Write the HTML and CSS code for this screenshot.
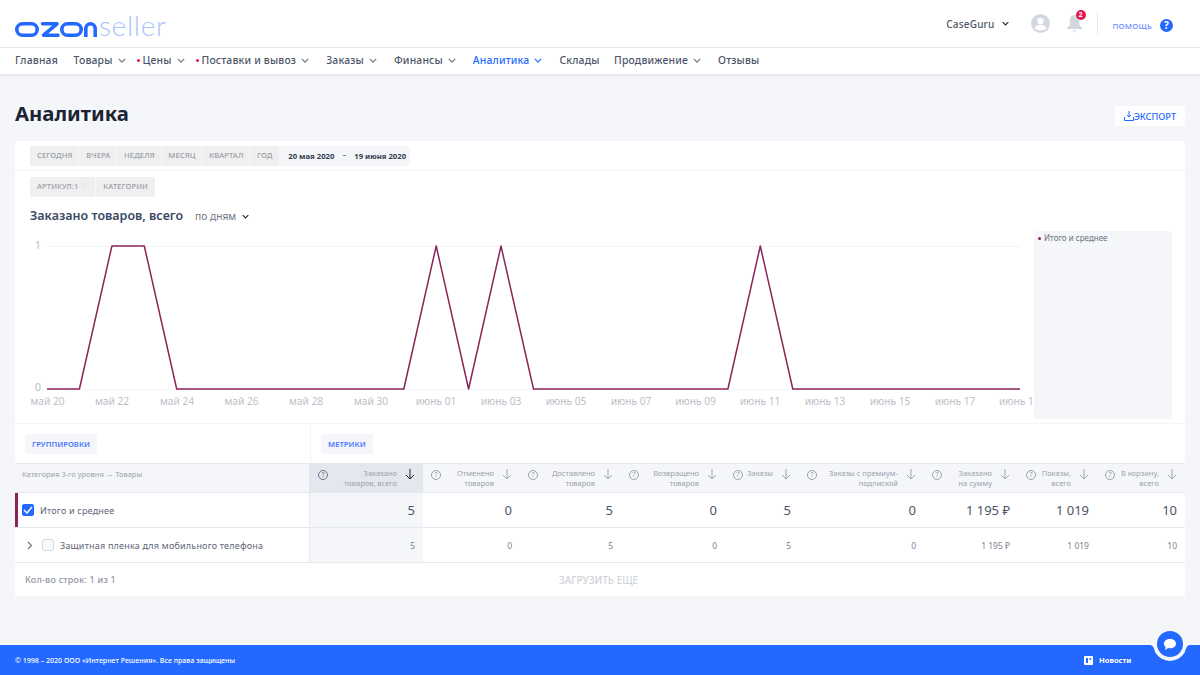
FILE: index.html
```html
<!DOCTYPE html>
<html lang="ru">
<head>
<meta charset="utf-8">
<title>Аналитика</title>
<link rel="stylesheet" href="styles.css">
</head>
<body>
<header class="topbar">
  <div class="logo">
    <svg class="logo-mark" width="82" height="15" viewBox="0 0 82 15" fill="none" stroke="#2369ff" stroke-width="3.600" role="img" aria-label="ozon">
      <rect x="1.800" y="1.800" width="20.400" height="11.400" rx="5.700"/>
      <polyline points="27.500,1.800 42,1.800 28.500,13.200 43,13.200" stroke-linejoin="round" stroke-linecap="round"/>
      <rect x="46.800" y="1.800" width="19.400" height="11.400" rx="5.700"/>
      <path d="M70.800 15V6.500a4.700 4.700 0 0 1 9.400 0V15"/>
    </svg>
    <span class="logo-text">seller</span>
  </div>
  <div class="top-right">
    <span class="account">CaseGuru</span>
    <svg class="chev dark acc-chev" viewBox="0 0 10 6" width="7" height="5"><path d="M1 1l4 4 4-4"/></svg>
    <svg class="avatar" width="19" height="19" viewBox="0 0 19 19"><circle cx="9.500" cy="9.500" r="9.500" fill="#d3d7e0"/><circle cx="9.500" cy="7" r="3.200" fill="#fff"/><path d="M3.500 14.500c.8-2.800 3.200-3.700 6-3.700s5.200.9 6 3.700c-1.500 1.300-3.500 2-6 2s-4.500-.7-6-2z" fill="#fff"/></svg>
    <span class="bell-wrap">
      <svg width="15" height="19" viewBox="0 0 15 19"><path d="M7.500 1c3.300 0 4.800 3 4.800 6v4l2.700 3v1H0v-1l2.700-3V7c0-3 1.500-6 4.800-6z" fill="#d3d7e0"/><path d="M5.500 16.500h4l-2 2z" fill="#d3d7e0"/></svg>
      <span class="badge">2</span>
    </span>
    <span class="divider"></span>
    <span class="help">ПОМОЩЬ</span>
    <span class="help-icon">?</span>
  </div>
</header>
<nav class="mainnav">
  <a class="nav-item">Главная</a>
  <a class="nav-item tight">Товары<svg class="chev" viewBox="0 0 10 6" width="8" height="5"><path d="M1 1l4 4 4-4"/></svg></a>
  <a class="nav-item tight"><i class="dot"></i>Цены<svg class="chev" viewBox="0 0 10 6" width="8" height="5"><path d="M1 1l4 4 4-4"/></svg></a>
  <a class="nav-item"><i class="dot"></i>Поставки и вывоз<svg class="chev" viewBox="0 0 10 6" width="8" height="5"><path d="M1 1l4 4 4-4"/></svg></a>
  <a class="nav-item">Заказы<svg class="chev" viewBox="0 0 10 6" width="8" height="5"><path d="M1 1l4 4 4-4"/></svg></a>
  <a class="nav-item">Финансы<svg class="chev" viewBox="0 0 10 6" width="8" height="5"><path d="M1 1l4 4 4-4"/></svg></a>
  <a class="nav-item active">Аналитика<svg class="chev" viewBox="0 0 10 6" width="8" height="5"><path d="M1 1l4 4 4-4"/></svg></a>
  <a class="nav-item short">Склады</a>
  <a class="nav-item">Продвижение<svg class="chev" viewBox="0 0 10 6" width="8" height="5"><path d="M1 1l4 4 4-4"/></svg></a>
  <a class="nav-item">Отзывы</a>
</nav>
<main class="page">
  <div class="title-row">
    <h1>Аналитика</h1>
    <button class="export">
      <svg width="10" height="10" viewBox="0 0 10 10" fill="none" stroke="#2369ff" stroke-width="1"><path d="M5 0v6M3 4l2 2 2-2M.5 6v3.500h9V6"/></svg>ЭКСПОРТ
    </button>
  </div>
  <section class="card">
    <div class="filters">
      <div class="seg">
        <span>СЕГОДНЯ</span><span>ВЧЕРА</span><span>НЕДЕЛЯ</span><span>МЕСЯЦ</span><span>КВАРТАЛ</span><span>ГОД</span>
      </div>
      <div class="dates"><b>20 мая 2020</b><i>–</i><b>19 июня 2020</b></div>
    </div>
    <div class="tags">
      <span class="tag">АРТИКУЛ:1<em>×</em></span><span class="tag">КАТЕГОРИИ</span>
    </div>
    <div class="chart-head">
      <h2>Заказано товаров, всего</h2>
      <span class="by">по дням</span>
      <svg class="chev dark" viewBox="0 0 10 6" width="7" height="5"><path d="M1 1l4 4 4-4"/></svg>
    </div>
    <div class="chart-wrap">
      <svg class="chart" width="1019" height="188" viewBox="15 231 1019 188">
        <line x1="47" x2="1020" y1="246.500" y2="246.500" class="grid"/>
        <line x1="47" x2="1020" y1="389.500" y2="389.500" class="grid"/>
        <text x="38" y="249" class="ylab" text-anchor="middle">1</text>
        <text x="38" y="391" class="ylab" text-anchor="middle">0</text>
        <polyline class="series" points="47,389 79.400,389 111.900,246 144.300,246 176.700,389 403.800,389 436.200,246 468.600,389 501,246 533.500,389 727.900,389 760.300,246 792.800,389 1020,389"/>
        <text x="47.500" y="405" class="xlab" text-anchor="middle">май 20</text>
        <text x="112" y="405" class="xlab" text-anchor="middle">май 22</text>
        <text x="177" y="405" class="xlab" text-anchor="middle">май 24</text>
        <text x="241.500" y="405" class="xlab" text-anchor="middle">май 26</text>
        <text x="306" y="405" class="xlab" text-anchor="middle">май 28</text>
        <text x="371" y="405" class="xlab" text-anchor="middle">май 30</text>
        <text x="436" y="405" class="xlab" text-anchor="middle">июнь 01</text>
        <text x="501" y="405" class="xlab" text-anchor="middle">июнь 03</text>
        <text x="566" y="405" class="xlab" text-anchor="middle">июнь 05</text>
        <text x="631" y="405" class="xlab" text-anchor="middle">июнь 07</text>
        <text x="695.500" y="405" class="xlab" text-anchor="middle">июнь 09</text>
        <text x="760" y="405" class="xlab" text-anchor="middle">июнь 11</text>
        <text x="825" y="405" class="xlab" text-anchor="middle">июнь 13</text>
        <text x="890" y="405" class="xlab" text-anchor="middle">июнь 15</text>
        <text x="955" y="405" class="xlab" text-anchor="middle">июнь 17</text>
        <text x="999" y="405" class="xlab">июнь 1</text>
      </svg>
      <aside class="legend"><i></i>Итого и среднее</aside>
    </div>
    <div class="controls">
      <div class="ctrl-left"><span class="pill">ГРУППИРОВКИ</span></div>
      <div class="ctrl-right"><span class="pill">МЕТРИКИ</span></div>
    </div>
    <div class="tbl">
      <div class="row head">
        <div class="c0"><span class="cat">Категория 3-го уровня → Товары</span></div>
        <div class="hc sel"><i class="q">?</i><span>Заказано<br>товаров, всего</span><svg class="arr" width="10" height="11" viewBox="0 0 10 11"><path d="M5 0v10M1 6l4 4 4-4"/></svg></div>
        <div class="hc"><i class="q">?</i><span>Отменено<br>товаров</span><svg class="arr" width="10" height="11" viewBox="0 0 10 11"><path d="M5 0v10M1 6l4 4 4-4"/></svg></div>
        <div class="hc"><i class="q">?</i><span>Доставлено<br>товаров</span><svg class="arr" width="10" height="11" viewBox="0 0 10 11"><path d="M5 0v10M1 6l4 4 4-4"/></svg></div>
        <div class="hc"><i class="q">?</i><span>Возвращено<br>товаров</span><svg class="arr" width="10" height="11" viewBox="0 0 10 11"><path d="M5 0v10M1 6l4 4 4-4"/></svg></div>
        <div class="hc"><i class="q">?</i><span>Заказы</span><svg class="arr" width="10" height="11" viewBox="0 0 10 11"><path d="M5 0v10M1 6l4 4 4-4"/></svg></div>
        <div class="hc"><i class="q">?</i><span>Заказы с премиум-<br>подпиской</span><svg class="arr" width="10" height="11" viewBox="0 0 10 11"><path d="M5 0v10M1 6l4 4 4-4"/></svg></div>
        <div class="hc"><i class="q">?</i><span>Заказано<br>на сумму</span><svg class="arr" width="10" height="11" viewBox="0 0 10 11"><path d="M5 0v10M1 6l4 4 4-4"/></svg></div>
        <div class="hc"><i class="q">?</i><span>Показы,<br>всего</span><svg class="arr" width="10" height="11" viewBox="0 0 10 11"><path d="M5 0v10M1 6l4 4 4-4"/></svg></div>
        <div class="hc"><i class="q">?</i><span>В корзину,<br>всего</span><svg class="arr" width="10" height="11" viewBox="0 0 10 11"><path d="M5 0v10M1 6l4 4 4-4"/></svg></div>
      </div>
      <div class="row total">
        <div class="c0 marked">
          <span class="check on"><svg width="10" height="8" viewBox="0 0 10 8" fill="none" stroke="#fff" stroke-width="1.400"><path d="M1 4l3 3 5-6"/></svg></span>
          <span class="rname">Итого и среднее</span>
        </div>
        <div class="v sel">5</div><div class="v">0</div><div class="v">5</div><div class="v">0</div><div class="v">5</div><div class="v">0</div><div class="v">1 195 ₽</div><div class="v">1 019</div><div class="v">10</div>
      </div>
      <div class="row item">
        <div class="c0">
          <svg class="expand" width="6" height="9" viewBox="0 0 6 9" fill="none" stroke="#6d7686" stroke-width="1.200"><path d="M1 1l3.500 3.500L1 8"/></svg>
          <span class="check"></span>
          <span class="rname">Защитная пленка для мобильного телефона</span>
        </div>
        <div class="v sel">5</div><div class="v">0</div><div class="v">5</div><div class="v">0</div><div class="v">5</div><div class="v">0</div><div class="v">1 195 ₽</div><div class="v">1 019</div><div class="v">10</div>
      </div>
    </div>
    <div class="tbl-foot">
      <span class="count">Кол-во строк: 1 из 1</span>
      <span class="more">ЗАГРУЗИТЬ ЕЩЕ</span>
    </div>
  </section>
</main>
<footer class="foot">
  <span class="copy">© 1998 – 2020 ООО «Интернет Решения». Все права защищены</span>
  <span class="news">
    <svg width="9" height="9" viewBox="0 0 9 9"><rect width="9" height="9" rx="1" fill="#fff"/><path d="M2 2h2v5H2zM5.500 2H7v2H5.500z" fill="#2369ff"/></svg>
    Новости
  </span>
  <svg class="chat-notch" width="40" height="17" viewBox="0 0 40 17"><path d="M0 0H40C36.500 0 36 4 34.400 8A17 17 0 0 1 5.600 8C4 4 3.500 0 0 0Z"/></svg>
  <span class="chat">
    <svg width="14" height="13" viewBox="0 0 14 13"><path d="M7 1c3.500 0 6 2 6 4.700S10.500 10.300 7 10.300c-.7 0-1.200 0-1.800-.2L2 12l.7-3C1.600 8.200 1 7 1 5.700 1 3 3.500 1 7 1z" fill="#fff"/></svg>
  </span>
</footer>
</body>
</html>
```
FILE: styles.css
```css
* { box-sizing: border-box; }
html, body { margin: 0; padding: 0; }
body {
  width: 1200px;
  height: 675px;
  overflow: hidden;
  background: #f5f6fa;
  font-family: "Noto Sans", "Liberation Sans", sans-serif;
  color: #3c4658;
  display: flex;
  flex-direction: column;
}
.topbar {
  height: 48px;
  background: #fff;
  border-bottom: 1px solid #eceef3;
  display: flex;
  align-items: center;
  justify-content: space-between;
  padding: 0 27px 0 15px;
}
.logo { display: flex; align-items: flex-end; height: 30px; margin-top: 2px; }
.logo-mark { display: block; margin-bottom: 3px; }
.logo-text {
  font-family: "Lato", sans-serif;
  font-weight: 300;
  font-size: 28px;
  line-height: 30px;
  color: #a9c3fb;
  margin-left: 2px;
  letter-spacing: .7px;
}
.top-right { display: flex; align-items: center; }
.account { font-size: 10px; font-weight: 500; color: #4b5565; letter-spacing: .2px; }
.chev { fill: none; stroke: #6d7686; stroke-width: 1.500; }
.chev.dark { stroke: #1d2433; }
.acc-chev { margin-left: 7px; margin-right: 22px; }
.bell-wrap { position: relative; display: flex; margin-left: 17px; }
.badge {
  position: absolute;
  top: -4px;
  left: 9px;
  width: 10px;
  height: 10px;
  border-radius: 50%;
  background: #e5174f;
  color: #fff;
  font-size: 7px;
  font-weight: 700;
  line-height: 10px;
  text-align: center;
}
.divider { width: 1px; height: 23px; background: #e6e9ef; margin: 0 15px; }
.help { font-size: 7.900px; font-weight: 500; color: #6d8dff; letter-spacing: .2px; margin-top: 5px; }
.help-icon {
  width: 13px;
  height: 13px;
  margin: 4px 0 0 8px;
  border-radius: 50%;
  background: #2369ff;
  color: #fff;
  font-size: 10px;
  font-weight: 700;
  line-height: 13px;
  text-align: center;
}
.mainnav {
  height: 26px;
  background: #fff;
  box-shadow: 0 1px 3px rgba(30, 40, 70, .12);
  display: flex;
  align-items: center;
  padding: 0 15px 2px;
  position: relative;
}
.nav-item {
  display: flex;
  align-items: center;
  font-size: 10.400px;
  font-weight: 500;
  color: #4c5667;
  letter-spacing: .17px;
  white-space: nowrap;
  margin-right: 17px;
}
.nav-item.tight { margin-right: 11px; }
.nav-item.short { margin-right: 14.500px; }
.nav-item:first-child { margin-right: 15.500px; }
.nav-item .chev { margin-left: 5px; }
.nav-item.active { color: #2369ff; }
.nav-item.active .chev { stroke: #2369ff; }
.dot { width: 3px; height: 3px; border-radius: 50%; background: #e5174f; margin-right: 3px; }
.page { flex: 1; padding: 0 15px; min-height: 0; }
.title-row {
  display: flex;
  justify-content: space-between;
  align-items: flex-start;
  height: 67px;
  padding-top: 25px;
}
h1 { margin: 0; font-size: 20.300px; line-height: 28px; font-weight: 700; color: #1c2433; }
.export {
  margin-top: 7px;
  width: 70px;
  height: 20px;
  background: #fff;
  border: 0;
  border-radius: 2px;
  padding: 0;
  font: 500 9.200px "Noto Sans", sans-serif;
  color: #2369ff;
  display: flex;
  align-items: center;
  justify-content: center;
  gap: 0;
}
.card { background: #fff; height: 455px; display: flex; flex-direction: column; }
.filters {
  height: 30px;
  padding: 5px 0 0 15px;
  border-bottom: 1px solid #f5f6f9;
  display: flex;
  align-items: flex-start;
}
.seg, .tags { display: flex; }
.seg span, .tag {
  height: 20px;
  background: #efefef;
  font-size: 7.600px;
  font-weight: 500;
  line-height: 19px;
  color: #9a9fa8;
  padding: 0 7px;
  letter-spacing: .1px;
  box-shadow: inset -1px 0 0 #f7f7f7;
}
.seg span { padding: 0 6.800px; }
.seg span:first-child { padding-left: 7px; }
.seg span:first-child, .tag:first-child { border-radius: 2px 0 0 2px; }
.seg span:last-child, .tag:last-child { border-radius: 0 2px 2px 0; box-shadow: none; }
.dates {
  height: 20px;
  background: #f5f6fa;
  border-radius: 0 2px 2px 0;
  display: flex;
  align-items: center;
  gap: 8px;
  padding: 0 4px 0 9px;
  font-size: 7.700px;
  color: #333c4d;
}
.dates i { font-style: normal; margin-top: -4px; }
.tags { padding: 6px 0 0 15px; height: 25px; }
.tag em { display: inline-block; width: 11px; padding-left: 3px; font-style: normal; color: #e7e9ee; font-size: 10px; line-height: 10px; }
.chart-head {
  display: flex;
  align-items: center;
  height: 20px;
  margin: 10px 0 0 15px;
}
h2 { margin: 0; font-size: 12.500px; font-weight: 600; color: #3b4a63; line-height: 20px; }
.by { font-size: 10.200px; color: #6e7685; margin-left: 12px; }
.chart-head .chev { margin-left: 6px; }
.chart-wrap { display: flex; height: 188px; margin-top: 5px; align-items: stretch; }
.chart { display: block; flex: none; overflow: hidden; }
.grid { stroke: #f2f3f6; stroke-width: 1; }
.series { fill: none; stroke: #8a2558; stroke-width: 1.500; stroke-linejoin: round; }
.ylab, .xlab { font-family: "Noto Sans", sans-serif; fill: #bcc0c7; }
.ylab { font-size: 11px; }
.xlab { font-size: 10.200px; }
.legend {
  width: 138px;
  background: #f5f6fa;
  border-radius: 3px;
  padding: 1px 0 0 4px;
  font-size: 8px;
  line-height: 12px;
  color: #6a7282;
  display: block;
}
.legend i {
  display: inline-block;
  width: 3px;
  height: 3px;
  border-radius: 50%;
  background: #8a2558;
  margin-right: 3px;
  vertical-align: middle;
}
.controls {
  display: flex;
  height: 40px;
  margin-top: 4px;
  border-top: 1px solid #f5f6f9;
}
.ctrl-left, .ctrl-right { display: flex; align-items: flex-start; padding: 10px 0 0 10px; }
.ctrl-left { width: 295px; }
.ctrl-right { flex: 1; border-left: 1px solid #f2f3f6; }
.pill {
  height: 20px;
  padding: 0 7px;
  background: #f5f6fa;
  border-radius: 2px;
  font-size: 7.700px;
  font-weight: 600;
  line-height: 20px;
  color: #4d79ff;
}
.tbl { border-top: 1px solid #e5e8ee; }
.row {
  display: grid;
  grid-template-columns: 295px 113px 97px 101px 104px 74px 125px 94px 79px 88px;
  border-bottom: 1px solid #e5e8ee;
}
.row.head { height: 29px; background: #f5f6fa; }
.row.total, .row.item { height: 35px; }
.c0 { display: flex; align-items: center; border-right: 1px solid #e5e8ee; padding-left: 7px; }
.head .c0 { align-items: flex-start; padding-top: 5px; }
.cat { font-size: 7.500px; color: #9ba1ac; line-height: 11px; }
.hc {
  display: grid;
  grid-template-columns: 11px 1fr 10px;
  padding: 5px 8px 0 8px;
  font-size: 7.500px;
  line-height: 9.500px;
  color: #9ba1ac;
  text-align: right;
}
.hc span { margin-right: 8px; white-space: nowrap; }
.hc.sel { background: #e4e7ee; }
.hc svg.arr { fill: none; stroke: #a0a6b1; stroke-width: 1; }
.hc.sel svg.arr { stroke: #1d2433; }
.q {
  display: block;
  width: 10px;
  height: 10px;
  border: 1px solid #9ba1ac;
  border-radius: 50%;
  font-style: normal;
  font-size: 7px;
  line-height: 8px;
  text-align: center;
  color: #9ba1ac;
  margin-top: 1px;
}
.hc.sel .q { border-color: #6d7686; color: #6d7686; }
.marked { box-shadow: inset 3px 0 0 #8a2558; }
.check {
  width: 12px;
  height: 12px;
  border: 1px solid #d6dae3;
  border-radius: 2px;
  background: #f7f8fb;
  display: flex;
  align-items: center;
  justify-content: center;
  flex: none;
}
.check.on { background: #2369ff; border-color: #2369ff; }
.rname { font-size: 9px; color: #5e6675; letter-spacing: .2px; margin-left: 6px; white-space: nowrap; }
.expand { margin: 0 9px 0 5px; flex: none; }
.v {
  text-align: right;
  padding-right: 8px;
  align-self: stretch;
  display: flex;
  align-items: center;
  justify-content: flex-end;
  white-space: nowrap;
}
.v.sel { background: #f5f6fa; }
.total .v { font-size: 13px; color: #4c5565; }
.item .v { font-size: 8.500px; color: #7a8290; }
.tbl-foot { flex: 1; position: relative; display: flex; align-items: center; padding-left: 10px; }
.count { font-size: 9px; color: #8f95a1; letter-spacing: .2px; font-weight: 500; }
.more {
  position: absolute;
  left: 544px;
  top: 10px;
  font-size: 10px;
  font-weight: 500;
  color: #cfd2d8;
}
.foot {
  height: 30px;
  flex: none;
  background: #2369ff;
  position: relative;
  display: flex;
  align-items: center;
  padding: 0 15px;
  color: #fff;
}
.copy { font-size: 7.050px; font-weight: 500; }
.news {
  position: absolute;
  left: 1084px;
  top: 10px;
  display: flex;
  align-items: center;
  gap: 6px;
  font-size: 7.500px;
  font-weight: 700;
}
.chat-notch {
  position: absolute;
  left: 1150px;
  top: 0;
  fill: #f5f6fa;
}
.chat {
  position: absolute;
  left: 1157px;
  top: -14px;
  width: 26px;
  height: 26px;
  background: #2369ff;
  border-radius: 50%;
  display: flex;
  align-items: center;
  justify-content: center;
}
```
